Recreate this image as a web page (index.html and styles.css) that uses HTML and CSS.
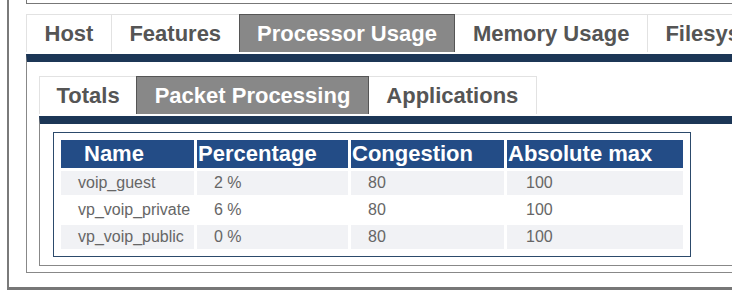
FILE: index.html
```html
<!DOCTYPE html>
<html lang="en">
<head>
    <meta charset="UTF-8">
    <title>Processor Usage</title>
    <link rel="stylesheet" href="styles.css">
</head>
<body>
<div class="frame">
    <div class="prevBox"></div>
    <div class="tabRow">
        <div class="tab">Host</div>
        <div class="tab">Features</div>
        <div class="tab active">Processor Usage</div>
        <div class="tab">Memory Usage</div>
        <div class="tab">Filesystem Usage</div>
    </div>
    <div class="panel">
        <div class="tabRow">
            <div class="tab tabNarrow">Totals</div>
            <div class="tab active">Packet Processing</div>
            <div class="tab">Applications</div>
        </div>
        <div class="panel subPanel">
            <table class="tbUsage">
                <tr>
                    <th class="colName">Name</th>
                    <th class="colPct">Percentage</th>
                    <th class="colCong">Congestion</th>
                    <th class="colMax">Absolute max</th>
                </tr>
                <tr class="odd">
                    <td>voip_guest</td>
                    <td>2 %</td>
                    <td>80</td>
                    <td class="tdMax">100</td>
                </tr>
                <tr>
                    <td>vp_voip_private</td>
                    <td>6 %</td>
                    <td>80</td>
                    <td class="tdMax">100</td>
                </tr>
                <tr class="odd">
                    <td>vp_voip_public</td>
                    <td>0 %</td>
                    <td>80</td>
                    <td class="tdMax">100</td>
                </tr>
            </table>
        </div>
    </div>
</div>
</body>
</html>
```

FILE: styles.css
```css
body{
    margin: 0;
    overflow: hidden;
    font-family: "Liberation Sans", Arial, Helvetica, sans-serif;
}
.frame{
    margin-left: 7px;
    width: 1000px;
    border-left: 2px solid #7a7a7a;
    border-bottom: 3px solid #777;
    padding: 0 0 14px 17px;
}
.prevBox{
    height: 3px;
    border-left: 1px solid #777;
    border-bottom: 1px solid #777;
    margin-bottom: 10px;
}
.tabRow{
    display: flex;
    margin-bottom: 2px;
}
.tab{
    height: 37px;
    line-height: 38px;
    padding: 0 17.5px;
    border: 1px solid #e2e2e2;
    border-bottom: 0;
    margin-right: -1px;
    font-size: 22px;
    font-weight: bold;
    color: #555;
    background-color: white;
    white-space: nowrap;
}
.tab.tabNarrow{
    padding: 0 16.5px;
}
.tab.active{
    background-color: #888;
    border-color: #555;
    color: white;
    position: relative;
}
.panel{
    border-top: 8px solid #1c3656;
    border-left: 1px solid #888;
    border-bottom: 1px solid #888;
    padding: 14px 0 6px 12px;
}
.subPanel{
    border-top-width: 8px;
    padding: 8px 0 8px 13px;
}
table.tbUsage{
    border: 1px solid #2c4a6b;
    border-spacing: 3px;
    padding: 4px;
}
.tbUsage th{
    height: 28px;
    padding: 0 0 0 1px;
    background-color: #234c86;
    color: white;
    font-size: 22px;
    font-weight: bold;
    text-align: left;
}
.tbUsage th.colName{
    width: 110px;
    padding-left: 23px;
}
.colPct{ width: 150px; }
.colCong{ width: 152px; }
.colMax{ width: 175px; }
.tbUsage td{
    height: 24px;
    padding: 0 0 0 17px;
    font-size: 16px;
    color: #666;
}
.tbUsage td.tdMax{
    padding-left: 19px;
}
.tbUsage tr.odd td{
    background-color: #f1f2f5;
}
```
